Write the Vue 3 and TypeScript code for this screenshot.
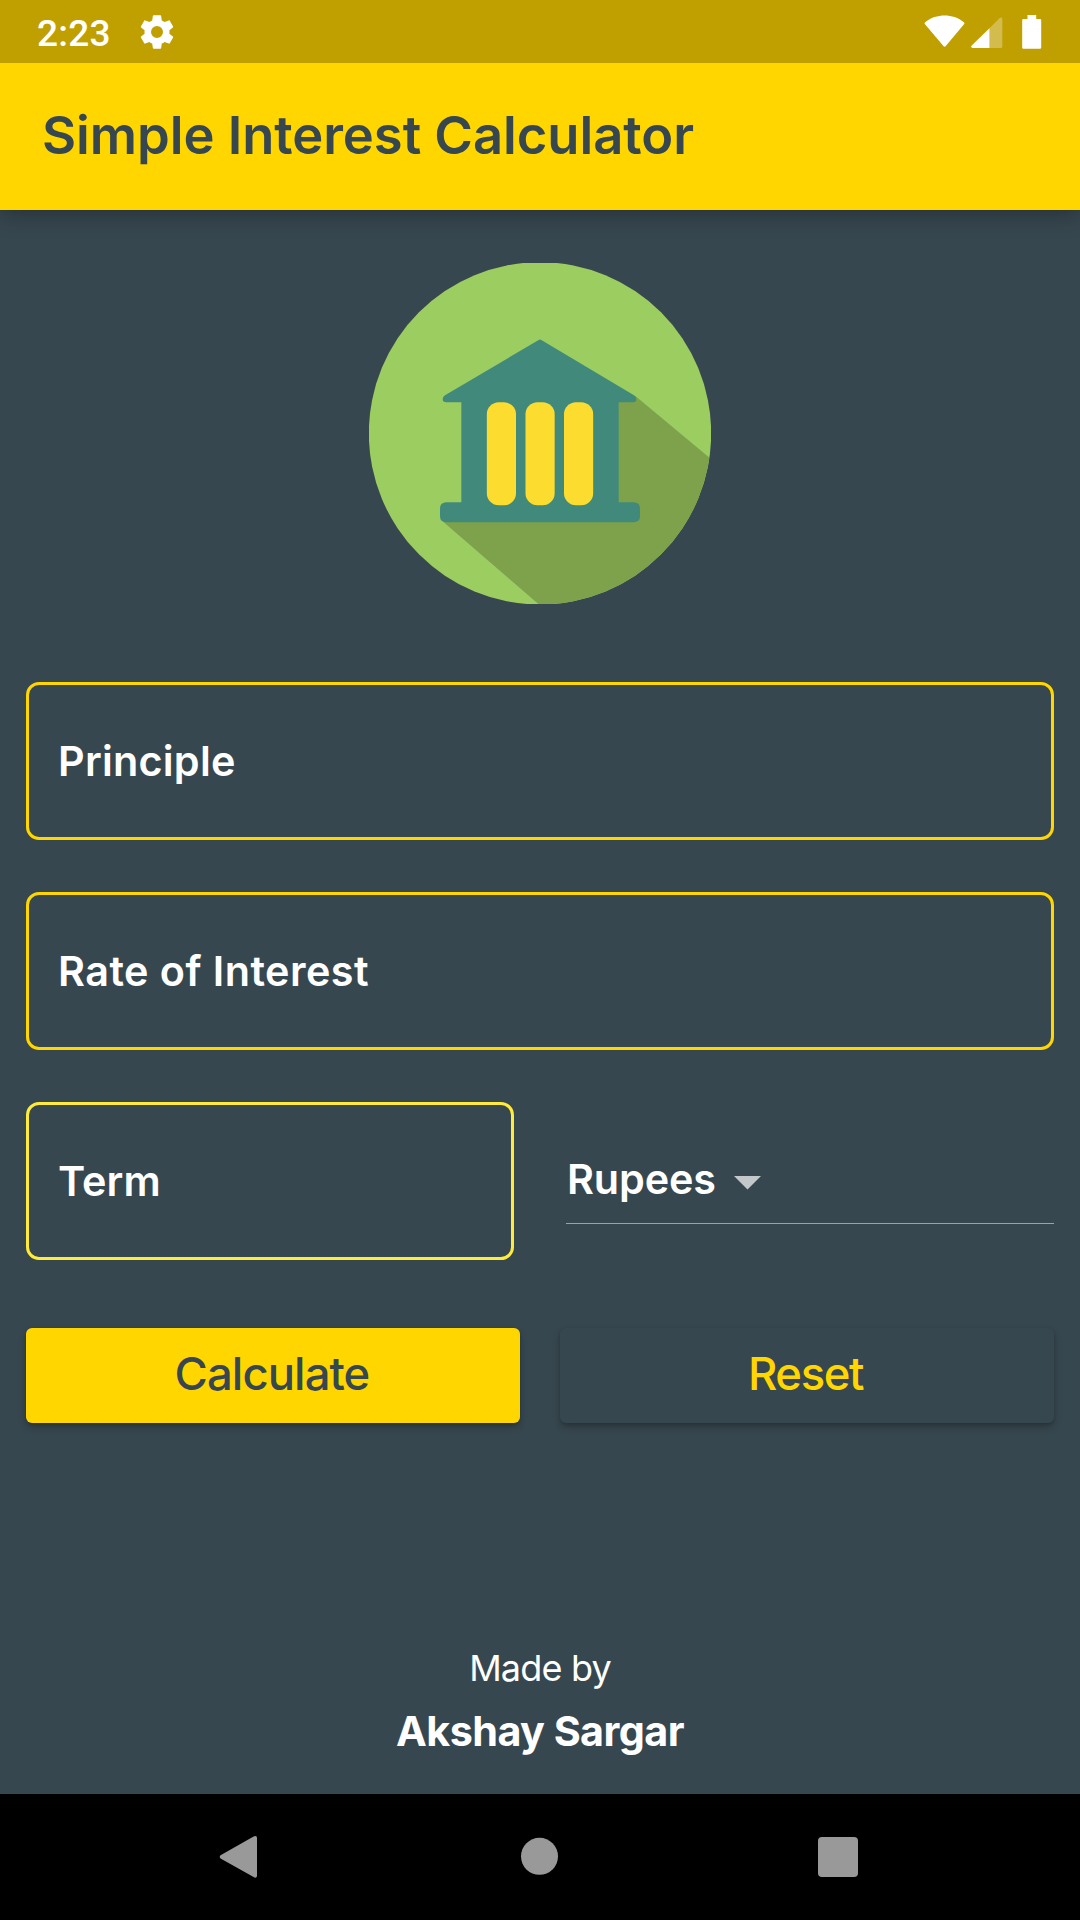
<script setup lang="ts">
import { ref } from 'vue'

const currencies: string[] = ['Rupees', 'Dollars', 'Pounds']
const currency = ref<string>(currencies[0])
const windows: number[] = [410.5, 526.5, 642]
</script>

<template>
  <div class="screen">
    <header class="status">
      <span class="clock">2:23</span>
      <svg class="gear" viewBox="0 0 24 24">
        <path fill="#fff" d="M19.43 12.98c.04-.32.07-.64.07-.98s-.03-.66-.07-.98l2.11-1.65c.19-.15.24-.42.12-.64l-2-3.46c-.12-.22-.39-.3-.61-.22l-2.49 1c-.52-.4-1.08-.73-1.69-.98l-.38-2.65C14.46 2.18 14.25 2 14 2h-4c-.25 0-.46.18-.49.42l-.38 2.65c-.61.25-1.17.59-1.69.98l-2.49-1c-.23-.09-.49 0-.61.22l-2 3.46c-.13.22-.07.49.12.64l2.11 1.65c-.04.32-.07.65-.07.98s.03.66.07.98l-2.11 1.65c-.19.15-.24.42-.12.64l2 3.46c.12.22.39.3.61.22l2.49-1c.52.4 1.08.73 1.69.98l.38 2.65c.03.24.24.42.49.42h4c.25 0 .46-.18.49-.42l.38-2.65c.61-.25 1.17-.59 1.69-.98l2.49 1c.23.09.49 0 .61-.22l2-3.46c.12-.22.07-.49-.12-.64l-2.11-1.65zM12 15.6A3.6 3.6 0 1 1 12 8.4a3.6 3.6 0 0 1 0 7.2z" />
      </svg>
      <svg class="indicators" viewBox="0 0 120 36">
        <path fill="#fff" d="M1.100 8.200C6.500 3.400 14 1.400 20.600 1.400s14 2 19.300 6.800c.7.700.7 1.400.1 2.100L21.800 32q-1.200 1.300-2.400 0L1 10.300c-.6-.7-.6-1.400.1-2.100z" />
        <path fill="#fff" fill-opacity=".3" d="M65.500 14.200 75.700 4c1.200-1 2.600-.5 2.600 1V32.500q0 1.500-1.500 1.500H65.500z" />
        <path fill="#fff" d="M65.500 14.200V34H48.800c-1.600 0-2.200-1.300-1.100-2.400z" />
        <path fill="#fff" d="M103.500 1h8.700v4h3.700q1.300 0 1.300 1.300V33.500q0 1.300-1.300 1.300H99.500q-1.300 0-1.300-1.300V6.300Q98.200 5 99.500 5h4z" />
      </svg>
    </header>

    <div class="appbar"><h1>Simple Interest Calculator</h1></div>

    <main class="content">
      <svg class="logo" viewBox="57 39 1026 1023">
        <defs>
          <clipPath id="disc"><circle cx="570" cy="550" r="513.5" /></clipPath>
        </defs>
        <circle cx="570" cy="550" r="513.5" fill="#9ccd61" />
        <path clip-path="url(#disc)" fill="#7da24b" d="M856 438 1090 633V1080H586L276 812 700 600V450z" />
        <path fill="#418a7b" d="M566 270q4-2.500 8 0L852 436q7 5 7 12 0 9-9 9H806V757H853q17 2 17 18v24q0 16-17 18H287q-17-2-17-18V775q0-16 17-18h47V457H289q-11 0-11-10 0-6 7-11z" />
        <rect v-for="x in windows" :key="x" :x="x" y="457" width="87.500" height="309" rx="36" ry="36" fill="#fcdd2f" />
      </svg>

      <div class="field">Principle</div>
      <div class="field rate">Rate of Interest</div>
      <div class="row">
        <div class="field term">Term</div>
        <div class="select">
          <span>{{ currency }}</span>
          <svg class="caret" viewBox="0 0 27 14"><path d="M0 0H27L13.500 13.500z" fill="#c3c8ca" /></svg>
        </div>
      </div>
      <div class="buttons">
        <button type="button" class="primary">Calculate</button>
        <button type="button" class="reset">Reset</button>
      </div>

      <footer>
        <div class="made">Made by</div>
        <div class="author">Akshay Sargar</div>
      </footer>
    </main>

    <nav class="navbar">
      <svg viewBox="0 0 720 126">
        <g fill="#999">
          <path d="M73.600 42.500c2-1.300 3.400-.4 3.400 1.600V81.500c0 2-1.400 2.800-3.400 1.600L41 64.700c-1.700-1-1.700-2.600 0-3.600z" />
          <circle cx="359.500" cy="62.300" r="18.500" />
          <rect x="638" y="43" width="40" height="40" rx="4" />
        </g>
      </svg>
    </nav>
  </div>
</template>

<style>
body {
  background: #37474f;
}
</style>

<style scoped>
.screen {
  display: flex;
  flex-direction: column;
  width: 1080px;
  height: 1920px;
  overflow: hidden;
  box-sizing: border-box;
  background: #37474f;
  color: #fff;
  font-family: Inter, Roboto, sans-serif;
}
.screen * {
  box-sizing: border-box;
}
svg {
  display: block;
  flex: none;
}
.status {
  position: relative;
  z-index: 1;
  display: flex;
  align-items: center;
  flex: none;
  height: 63px;
  padding: 0 36px 0 37px;
  background: #c0a000;
}
.clock {
  width: 100px;
  padding-top: 4px;
  font: 500 37px/44px Roboto, sans-serif;
  letter-spacing: 0.2px;
}
.gear {
  width: 40px;
  height: 40px;
}
.indicators {
  width: 120px;
  height: 36px;
  margin-left: auto;
}
.appbar {
  display: flex;
  align-items: center;
  flex: none;
  height: 147px;
  padding: 0 42px 3px;
  background: #ffd600;
  color: #37474f;
  box-shadow: 0 4px 22px rgba(0, 0, 0, 0.32);
}
h1 {
  margin: 0;
  font-size: 52.5px;
  font-weight: 600;
  line-height: 64px;
  letter-spacing: -0.04px;
}
.content {
  display: flex;
  flex-direction: column;
  flex: 1;
  padding: 53px 26px 0;
}
.logo {
  width: 342px;
  height: 341px;
  margin: 0 auto 78px;
}
.field {
  display: flex;
  align-items: center;
  flex: none;
  height: 158px;
  margin-bottom: 52px;
  padding: 0 29px 1px;
  border: 3px solid #ffd600;
  border-radius: 13px;
  font-size: 41.3px;
  font-weight: 600;
  letter-spacing: 0.25px;
}
.rate {
  letter-spacing: 0.47px;
}
.row {
  display: flex;
  justify-content: space-between;
  height: 158px;
  margin-bottom: 68px;
}
.row > * {
  width: 488px;
}
.term {
  border-color: #ffeb3b;
  letter-spacing: 0.08px;
}
.select {
  display: flex;
  align-items: center;
  height: 88px;
  margin-top: 34px;
  padding: 0 0 1px 1px;
  border-bottom: 1px solid #9ba3a7;
  font-size: 41.3px;
  font-weight: 600;
  letter-spacing: -0.1px;
}
.caret {
  width: 27px;
  height: 14px;
  margin: 7px 0 0 18px;
}
.buttons {
  display: flex;
  justify-content: space-between;
  flex: none;
}
button {
  width: 494px;
  height: 95px;
  padding: 0 2px 3px 0;
  border: 0;
  border-radius: 6px;
  background: #37474f;
  color: #ffd600;
  font: 500 45.4px/56px Inter, sans-serif;
  box-shadow: 0 4px 7px rgba(0, 0, 0, 0.26), 0 1px 3px rgba(0, 0, 0, 0.08);
}
.primary {
  background: #ffd600;
  color: #37474f;
  letter-spacing: -0.9px;
}
.reset {
  padding-right: 3px;
  letter-spacing: -1.39px;
}
footer {
  margin-top: 217px;
  text-align: center;
}
.made {
  font-size: 36px;
  line-height: 56px;
  letter-spacing: -0.82px;
}
.author {
  margin-top: 7px;
  font-size: 41.3px;
  font-weight: 700;
  line-height: 56px;
  letter-spacing: -0.56px;
}
.navbar {
  display: flex;
  justify-content: center;
  flex: none;
  height: 126px;
  background: #000;
}
.navbar svg {
  width: 720px;
  height: 126px;
}
</style>
